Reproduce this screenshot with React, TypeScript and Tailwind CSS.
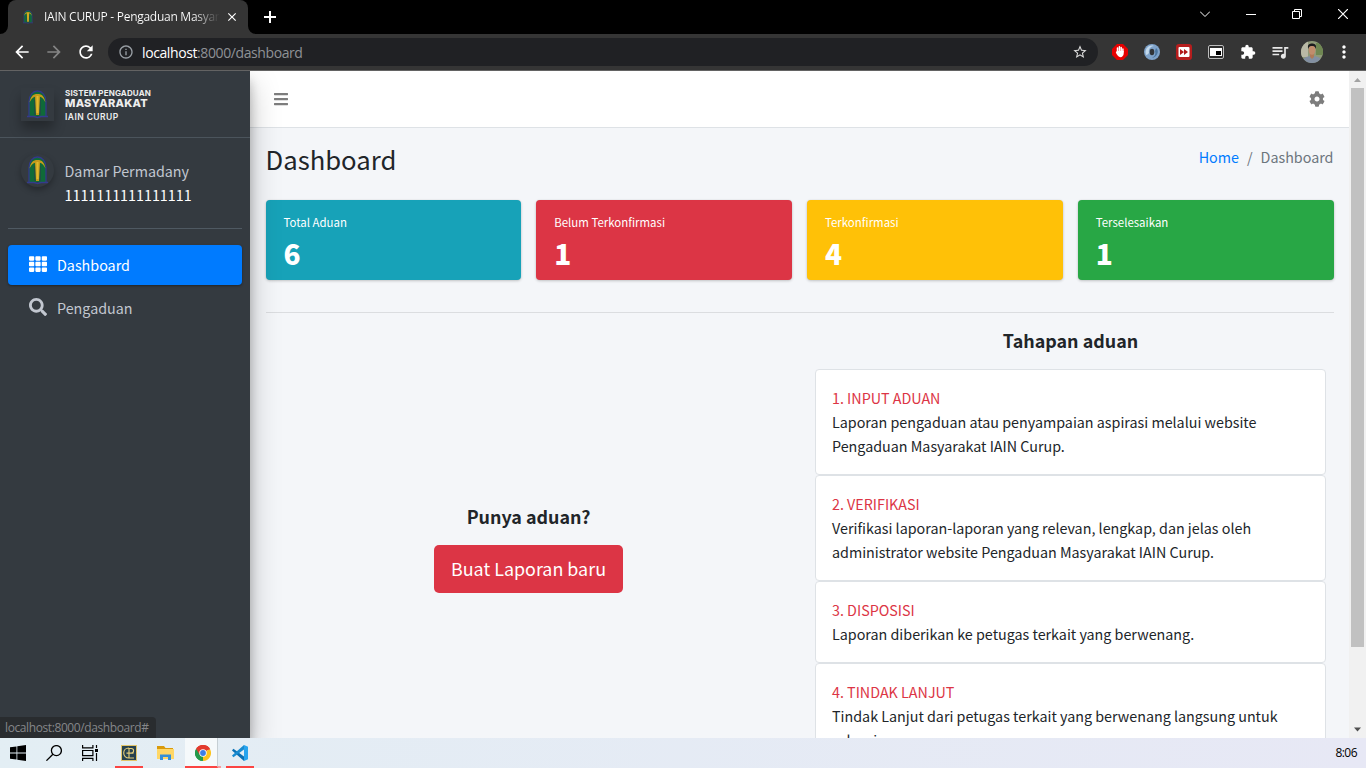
import React from "react";
import { FaBars, FaCog, FaSearch, FaTh } from "react-icons/fa";
import {
  MdArrowBack,
  MdArrowForward,
  MdClose,
  MdExtension,
  MdInfoOutline,
  MdMoreVert,
  MdQueueMusic,
  MdRefresh,
  MdStarBorder,
} from "react-icons/md";

const SANS = "font-['Noto_Sans_CJK_SC','Open_Sans',sans-serif]";
const UI = "font-['Open_Sans','Noto_Sans',sans-serif]";

function Crest({ className }: { className: string }) {
  return (
    <svg viewBox="0 0 33 33" className={className}>
      <path d="M8 28V14C8 7 12 3 16.500 3S25 7 25 14v14" fill="#0f6a38" stroke="#32398a" strokeWidth="1.300" />
      <path d="M14 12v15M19 12v15" stroke="#27424a" strokeWidth="1.200" />
      <path d="M8.500 14.500C9.500 8.500 12 6 16.500 6S23.500 8.500 24.500 14.500c-1.500-3-3-5-5.500-5.800L18 27h-3L14 8.700c-2.500.8-4 2.800-5.500 5.800z" fill="#c39a1c" />
      <path d="M16.500 8v17" stroke="#e0b92e" strokeWidth="2" />
      <path d="M6 28.500h7l3.500 1 3.500-1h7" fill="none" stroke="#343b8c" strokeWidth="1.500" />
    </svg>
  );
}

function TabStrip() {
  return (
    <div className="flex h-[34px] shrink-0 bg-black">
      <svg viewBox="0 0 8 8" className="h-2 w-2 self-end"><path d="M8 0v8H0a8 8 0 0 0 8-8z" fill="#353535" /></svg>
      <div className="flex w-[240px] items-center rounded-t-lg bg-[#353535] pl-3">
        <Crest className="h-4 w-4 shrink-0" />
        <div className="ml-2 w-[176px] overflow-hidden whitespace-nowrap bg-linear-to-r from-white from-85% to-[#353535] bg-clip-text text-[12px] tracking-[-0.27px] text-transparent">
          IAIN CURUP - Pengaduan Masyarakat
        </div>
        <MdClose className="ml-[5px] h-3.5 w-3.5 shrink-0 text-white" />
      </div>
      <svg viewBox="0 0 8 8" className="h-2 w-2 self-end"><path d="M0 0v8h8a8 8 0 0 1-8-8z" fill="#353535" /></svg>
      <svg viewBox="0 0 12 12" className="mt-[11px] ml-2 h-3 w-3" stroke="#fff" strokeWidth="2"><path d="M6 0v12M0 6h12" /></svg>
      <div className="ml-auto flex h-7 items-center pr-[18px]">
        <svg viewBox="0 0 10 6" className="h-1.5 w-2.5" fill="none" stroke="#fff"><path d="M0 .5l5 5 5-5" /></svg>
        <div className="ml-9 h-px w-2.5 bg-white" />
        <svg viewBox="0 0 10 10" className="ml-9 h-2.5 w-2.5" fill="none" stroke="#fff"><path d="M.5 2.500h7v7h-7zM2.500 2.500v-2h7v7h-2" /></svg>
        <svg viewBox="0 0 10 10" className="ml-9 h-2.5 w-2.5" fill="none" stroke="#fff" strokeWidth="1.200"><path d="M0 0l10 10M10 0L0 10" /></svg>
      </div>
    </div>
  );
}

function Toolbar() {
  return (
    <div className="flex h-[37px] shrink-0 items-center border-b border-[#636363] bg-[#353535] pl-3">
      <MdArrowBack className="h-5 w-5 text-white" />
      <MdArrowForward className="ml-3 h-5 w-5 text-[#858585]" />
      <MdRefresh className="ml-3 h-5 w-5 text-white" />
      <div className="ml-3 flex h-7 w-[990px] shrink-0 items-center rounded-full bg-[#202124] pr-2.5 pl-2.5">
        <MdInfoOutline className="h-4 w-4 text-[#9aa0a6]" />
        <div className="ml-2 text-[14px] tracking-[-0.4px] text-[#8f9296]">
          <span className="text-white">localhost</span>:8000/dashboard
        </div>
        <MdStarBorder className="ml-auto h-4 w-4 text-[#dcdcdc]" />
      </div>
      <div className="ml-3.5 flex items-center gap-4">
        <svg viewBox="0 0 16 16" className="h-4 w-4">
          <path d="M5 0h6l5 5v6l-5 5H5l-5-5V5z" fill="#e60000" />
          <path d="M5.500 8V4M7.400 8V2.800M9.200 8V3.400M10.900 8V5" stroke="#fff" strokeWidth="1.500" strokeLinecap="round" />
          <path d="M4.800 7h6.900v2.500c0 2-1.500 3.700-3.300 3.700C6.500 13.200 5 11 3.800 8.500z" fill="#fff" />
        </svg>
        <svg viewBox="0 0 16 16" className="h-4 w-4">
          <circle cx="8" cy="8" r="8" fill="#7fa3ca" />
          <path d="M2 11C0 5 5 0 10 2 7 2 4 5 5 9c-1 1-2 2-3 2z" fill="#c3d9ec" />
          <path d="M12 4c4 3 1 9-4 10 3-2 4-4 3-7z" fill="#4b759f" />
          <ellipse cx="8" cy="8" rx="2.300" ry="3.300" fill="#303438" />
        </svg>
        <svg viewBox="0 0 16 16" className="h-4 w-4">
          <rect width="16" height="16" rx="3" fill="#b61d1d" />
          <rect x="2.500" y="3" width="11" height="10" rx="1" fill="#fff" />
          <path d="M4 5l4 3-4 3zM8 5l4 3-4 3z" fill="#b21818" />
        </svg>
        <svg viewBox="0 0 16 16" className="h-4 w-4">
          <rect x=".5" y="1.500" width="15" height="13" rx="1.500" fill="#2c2c2c" stroke="#bdbdbd" />
          <rect x="2" y="4" width="12" height="8" fill="#fff" />
          <rect x="8" y="7" width="5" height="4" fill="#000" />
        </svg>
        <MdExtension className="h-4 w-4 text-white" />
        <MdQueueMusic className="-mx-0.5 h-5 w-5 text-[#e8e8e8]" />
      </div>
      <svg viewBox="0 0 22 22" className="ml-[13px] h-[22px] w-[22px] shrink-0">
        <clipPath id="avatar"><circle cx="11" cy="11" r="11" /></clipPath>
        <g clipPath="url(#avatar)">
          <rect width="22" height="22" fill="#8f9a78" />
          <path d="M0 0h7v16H0z" fill="#b9b9a6" /><path d="M15 2h7v12h-7z" fill="#6f8752" />
          <path d="M1 22c0-5 4-7 10-7s10 2 10 7z" fill="#8390a2" />
          <path d="M9 12h4v4l-2 2-2-2z" fill="#b07a58" />
          <ellipse cx="11" cy="9" rx="3.300" ry="4.800" fill="#c18d6c" />
          <path d="M7.200 8C6 3 9 2.500 11 2.500S16 3 14.800 8c-1-3-2-3-3.800-3S8.200 5 7.200 8z" fill="#1c1c1e" />
        </g>
      </svg>
      <MdMoreVert className="ml-[11px] h-5 w-5 shrink-0 text-white" />
    </div>
  );
}

function Sidebar() {
  return (
    <aside className="relative z-10 flex w-[250px] shrink-0 flex-col bg-[#343a40] shadow-[0_14px_28px_rgba(0,0,0,.25),0_10px_10px_rgba(0,0,0,.22)]">
      <div className="flex h-[67px] shrink-0 items-start border-b border-[#4b545c] pl-[21px]">
        <Crest className="mt-[17px] h-[33px] w-[33px] shadow-[0_8px_12px_rgba(0,0,0,.3)]" />
        <div className="mt-[17px] ml-[11px] whitespace-nowrap font-['Inter',sans-serif] font-bold text-[#eeeeee]">
          <div className="text-[8px] leading-[10px] tracking-[0.15px]">SISTEM PENGADUAN</div>
          <div className="text-[11px] leading-[10px] font-extrabold tracking-[0.25px]">MASYARAKAT</div>
          <div className="mt-1 text-[8.500px] leading-[10px] font-semibold tracking-[0.43px]">IAIN CURUP</div>
        </div>
      </div>
      <div className="mx-2 flex h-[91px] shrink-0 items-start border-b border-[#4f5962] pl-[13px]">
        <Crest className="mt-4 h-[33px] w-[33px] rounded-full shadow-[0_3px_6px_rgba(0,0,0,.3)]" />
        <div className="mt-[21px] ml-[10.500px] text-[14.320px] leading-6 text-[#c2c7d0]">
          <div>Damar Permadany</div>
          <div className="text-white">1111111111111111</div>
        </div>
      </div>
      <nav className="mx-2 mt-4 flex flex-col gap-[3px] text-[14.320px]">
        <div className="flex h-10 items-center rounded bg-[#007bff] pl-[21px] text-white shadow-[0_1px_3px_rgba(0,0,0,.12),0_1px_2px_rgba(0,0,0,.24)]">
          <FaTh className="mr-2.5 mb-0.5 h-[18px] w-[18px]" />
          <span>Dashboard</span>
        </div>
        <div className="flex h-10 items-center pl-[21px] text-[#c2c7d0]">
          <FaSearch className="mr-2.5 mb-0.5 h-[18px] w-[18px]" />
          <span>Pengaduan</span>
        </div>
      </nav>
      <div className={`mt-auto flex h-[21px] w-[156px] items-center rounded-tr bg-[#292c2f] pl-[5px] text-[12px] tracking-[-0.4px] text-[#85878a] ${UI}`}>
        localhost:8000/dashboard#
      </div>
    </aside>
  );
}

const stats = [
  { label: "Total Aduan", value: "6", color: "bg-[#17a2b8]" },
  { label: "Belum Terkonfirmasi", value: "1", color: "bg-[#dc3545]" },
  { label: "Terkonfirmasi", value: "4", color: "bg-[#ffc107]" },
  { label: "Terselesaikan", value: "1", color: "bg-[#28a745]" },
];

const steps = [
  { title: "1. INPUT ADUAN", lines: ["Laporan pengaduan atau penyampaian aspirasi melalui website", "Pengaduan Masyarakat IAIN Curup."] },
  { title: "2. VERIFIKASI", lines: ["Verifikasi laporan-laporan yang relevan, lengkap, dan jelas oleh", "administrator website Pengaduan Masyarakat IAIN Curup."] },
  { title: "3. DISPOSISI", lines: ["Laporan diberikan ke petugas terkait yang berwenang."] },
  { title: "4. TINDAK LANJUT", lines: ["Tindak Lanjut dari petugas terkait yang berwenang langsung untuk", "selesai."] },
];

function Content() {
  return (
    <main className="flex min-w-0 flex-1 flex-col bg-[#f4f6f9] text-[#212529]">
      <header className="flex h-[57px] shrink-0 items-center justify-between border-b border-[#dee2e6] bg-white pr-6 pl-6 text-[#7d7d7d]">
        <FaBars className="h-4 w-[14px]" />
        <FaCog className="h-4 w-4" />
      </header>
      <div className="flex h-[72px] shrink-0 items-start justify-between pr-[15.500px] pl-[15.500px]">
        <h1 className="mt-[13px] text-[25.700px] leading-[35px]">Dashboard</h1>
        <div className="mt-[17px] flex gap-2 text-[14.320px] leading-6 text-[#6c757d]">
          <span className="text-[#007bff]">Home</span>
          <span>/</span>
          <span>Dashboard</span>
        </div>
      </div>
      <div className="mx-[15.500px] grid h-20 shrink-0 grid-cols-4 gap-[15px] text-white">
        {stats.map((s) => (
          <div key={s.label} className={`rounded px-[18px] pt-[11px] shadow-[0_0_1px_rgba(0,0,0,.125),0_1px_3px_rgba(0,0,0,.2)] ${s.color}`}>
            <div className="text-[11.450px] leading-[22px]">{s.label}</div>
            <div className="text-[28px] leading-[40px] font-black">{s.value}</div>
          </div>
        ))}
      </div>
      <div className="mx-[15.500px] mt-8 h-px shrink-0 bg-[#dbdde0]" />
      <div className="mx-[7.500px] grid min-h-0 flex-1 grid-cols-2">
        <section className="flex flex-col items-center pt-[191px]">
          <h2 className="text-[17.900px] leading-6 font-bold">Punya aduan?</h2>
          <button className="mt-[17px] h-12 w-[189px] rounded-[5px] bg-[#dc3545] pb-0.5 text-[17.900px] leading-[30px] text-white">Buat Laporan baru</button>
        </section>
        <section className="flex flex-col px-[15.500px] pt-[15px]">
          <h2 className="mb-[17px] text-center text-[17.900px] leading-6 font-bold">Tahapan aduan</h2>
          {steps.map((s) => (
            <article key={s.title} className="shrink-0 rounded border border-[#dee2e6] bg-white p-4 text-[14.320px] leading-6 tracking-[-0.005px] whitespace-nowrap">
              <div className="text-[#dc3545]">{s.title}</div>
              {s.lines.map((l) => (
                <div key={l}>{l}</div>
              ))}
            </article>
          ))}
        </section>
      </div>
    </main>
  );
}

function Scrollbar() {
  return (
    <div className="flex w-[17px] shrink-0 flex-col items-center bg-[#f1f1f1]">
      <svg viewBox="0 0 17 17" className="h-[17px] w-[17px] shrink-0"><path d="M5 11l3.500-4 3.500 4z" fill="#a3a3a3" /></svg>
      <div className="h-[559px] w-[13px] bg-[#c1c1c1]" />
      <svg viewBox="0 0 17 17" className="mt-auto h-[17px] w-[17px] shrink-0"><path d="M5 6.500h7L8.500 10.500z" fill="#505050" /></svg>
    </div>
  );
}

function Taskbar() {
  return (
    <footer className="flex h-[30px] shrink-0 items-center bg-linear-to-r from-[#e3eef4] to-[#e7e8f5]">
      <svg viewBox="0 0 16 16" className="ml-2.5 h-4 w-4"><path d="M0 2.300L6.500 1.400v6.200H0zM7.300 1.300L16 0v7.600H7.300zM0 8.400h6.500v6.200L0 13.700zM7.300 8.400H16V16l-8.700-1.300z" fill="#000" /></svg>
      <svg viewBox="0 0 16 16" className="ml-5 h-4 w-4" fill="none" stroke="#000" strokeWidth="1.300"><circle cx="10.400" cy="5.600" r="5" /><path d="M6.900 9.200L.4 15.700" /></svg>
      <svg viewBox="0 0 16 16" className="ml-5 h-4 w-4" fill="none" stroke="#000" strokeWidth="1.200"><path d="M.6 0v2.900h10.300V0M.6 5.500h10.300v5.200H.6zM.6 16v-2.700h10.300V16M14.500 0v3M14.500 8v8" /><path d="M13 4h3v3h-3z" fill="#000" stroke="none" /></svg>
      <div className="ml-[17px] flex h-[30px] w-7 items-center justify-center border-b-2 border-[#fb4442]">
        <svg viewBox="0 0 16 16" className="mt-0.5 h-4 w-4">
          <path d="M0 0h16v16H0z" fill="#e2c469" /><path d="M1 1h14v14H1z" fill="#27414e" />
          <path d="M8 3C4.800 3 2.700 5.200 2.700 8s2.100 5 5.300 5h5M8 3v10M8 3.500h2.300a2.300 2.300 0 0 1 0 4.600H5.500M8 8.100h4.500" fill="none" stroke="#e8ce79" strokeWidth="1.100" />
        </svg>
      </div>
      <svg viewBox="0 0 17 16" className="ml-3.5 h-4 w-[17px]"><path d="M0 1h7l1.500 2H16v4H0z" fill="#d99a0b" /><path d="M0 4h17v10H0z" fill="#ffd766" /><path d="M3 15V9.500h11V15h-3v-3H6v3z" fill="#338fd8" /></svg>
      <div className="ml-[11px] flex h-[30px] w-[33px] items-center justify-center border-r border-b-2 border-r-[#c6cfd4] border-b-[#fb4442] bg-[#f5f9fb]">
        <svg viewBox="0 0 16 16" className="mt-0.5 ml-1 h-4 w-4">
          <path d="M8 8L1.070 4A8 8 0 0 1 14.930 4z" fill="#e33b2e" />
          <path d="M8 8V16A8 8 0 0 1 1.070 4z" fill="#249a4b" />
          <path d="M8 8l6.930-4A8 8 0 0 1 8 16z" fill="#fcc31e" />
          <path d="M8 4.400h7.200A8 8 0 0 0 1.070 4L4.500 10z" fill="#e33b2e" />
          <path d="M1.070 4l3.600 6L8 11.800 6.500 15.900A8 8 0 0 1 1.070 4z" fill="#249a4b" />
          <circle cx="8" cy="8" r="3.700" fill="#fff" /><circle cx="8" cy="8" r="2.900" fill="#3c7ee8" />
        </svg>
      </div>
      <div className="h-[30px] w-[3px] border-b-2 border-[#fa9a9c]" />
      <div className="ml-[5px] flex h-[30px] w-7 items-center justify-center border-b-2 border-[#fb4442]">
        <svg viewBox="0 0 16 16" className="mt-0.5 h-4 w-4"><path d="M1.400 3.800L12 11.500V16L0 5.400z" fill="#0b70b4" /><path d="M1.400 12.200L12 4.500V0L0 10.600z" fill="#188bd0" /><path d="M12 0l4 1.800v12.400L12 16z" fill="#28a4ee" /></svg>
      </div>
      <span className="mr-[9px] ml-auto text-[12px] tracking-[-0.55px] text-black">8:06</span>
    </footer>
  );
}

export default function App() {
  return (
    <div className={`flex h-[768px] w-[1366px] flex-col overflow-hidden ${UI}`}>
      <TabStrip />
      <Toolbar />
      <div className={`flex h-[667px] overflow-hidden ${SANS}`}>
        <Sidebar />
        <Content />
        <Scrollbar />
      </div>
      <Taskbar />
    </div>
  );
}
